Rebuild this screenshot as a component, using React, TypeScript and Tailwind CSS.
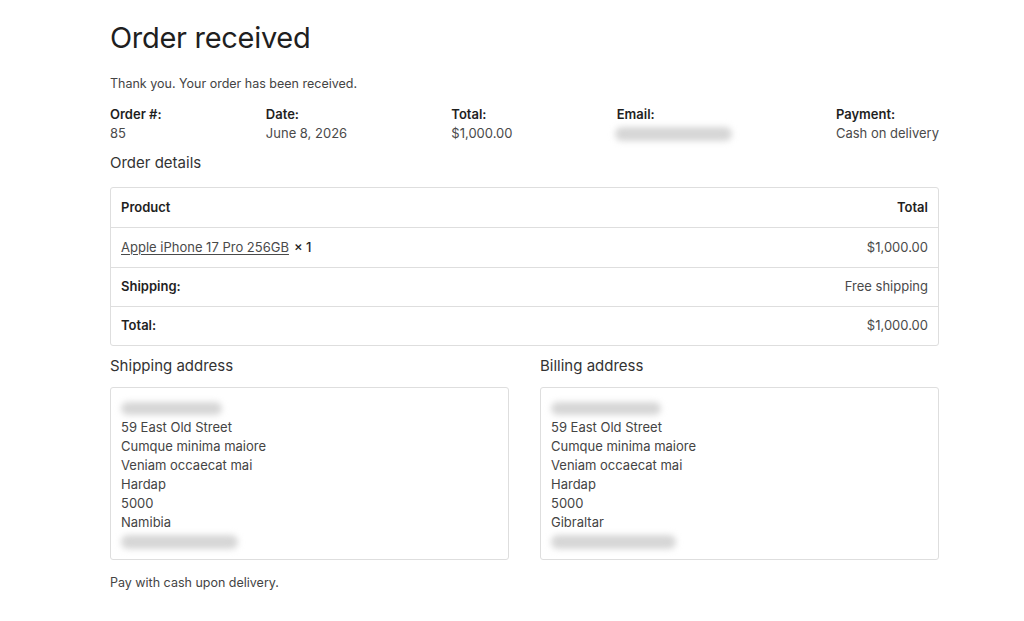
import React from "react";

const Blur = ({ w, h = 12, className = "" }: { w: number; h?: number; className?: string }) => (
  <div className={"rounded-full bg-[#d6d6d6] blur-[3px] " + className} style={{ width: w, height: h }} />
);

export default function App() {
  return (
    <div className="min-h-[621px] bg-white font-['Inter',sans-serif] text-[#4a4a4a]">
      <div className="ml-[110px] w-[829px] pt-[20px]">
        <h1 className="text-[29px] leading-[36px] font-normal tracking-[-0.3px] text-[#1f1f1f]">Order received</h1>
        <p className="mt-[19px] text-[12.5px] leading-[18px] text-[#444]">Thank you. Your order has been received.</p>
        <div className="mt-[12px] flex justify-between text-[13px] leading-[19px]">
          <div>
            <div className="font-semibold text-[#1f1f1f]">Order #:</div>
            <div>85</div>
          </div>
          <div>
            <div className="font-semibold text-[#1f1f1f]">Date:</div>
            <div>June 8, 2026</div>
          </div>
          <div>
            <div className="font-semibold text-[#1f1f1f]">Total:</div>
            <div>$1,000.00</div>
          </div>
          <div>
            <div className="font-semibold text-[#1f1f1f]">Email:</div>
            <div className="flex h-[19px] items-center">
              <Blur w={117} h={14} className="-ml-[2px]" />
            </div>
          </div>
          <div>
            <div className="font-semibold text-[#1f1f1f]">Payment:</div>
            <div>Cash on delivery</div>
          </div>
        </div>
        <h2 className="mt-[10px] text-[15px] leading-[20px] text-[#333]">Order details</h2>
        <div className="mt-[14px] overflow-hidden rounded-[3px] border border-[#dedede] text-[13px]">
          <div className="flex h-[39px] items-center justify-between px-[10px] font-semibold text-[#1f1f1f]">
            <span>Product</span>
            <span>Total</span>
          </div>
          <div className="flex h-[40px] items-center justify-between border-t border-[#dedede] px-[10px]">
            <span>
              <span className="underline underline-offset-2">Apple iPhone 17 Pro 256GB</span>
              <span className="ml-[5px] font-medium text-[#1f1f1f]">× 1</span>
            </span>
            <span>$1,000.00</span>
          </div>
          <div className="flex h-[39px] items-center justify-between border-t border-[#dedede] px-[10px]">
            <span className="font-semibold text-[#1f1f1f]">Shipping:</span>
            <span>Free shipping</span>
          </div>
          <div className="flex h-[39px] items-center justify-between border-t border-[#dedede] px-[10px]">
            <span className="font-semibold text-[#1f1f1f]">Total:</span>
            <span>$1,000.00</span>
          </div>
        </div>
        <div className="mt-[10px] grid grid-cols-2 gap-[31px]">
          {[
            { title: "Shipping address", country: "Namibia", w1: 101, w2: 117 },
            { title: "Billing address", country: "Gibraltar", w1: 110, w2: 125 },
          ].map((a) => (
            <div key={a.title}>
              <h3 className="text-[15px] leading-[20px] text-[#333]">{a.title}</h3>
              <div className="mt-[11px] rounded-[3px] border border-[#dedede] px-[10px] pt-[11px] pb-[8px] text-[13px] leading-[19px] text-[#444]">
                <div className="flex h-[19px] items-center">
                  <Blur w={a.w1} h={13} />
                </div>
                <div>59 East Old Street</div>
                <div>Cumque minima maiore</div>
                <div>Veniam occaecat mai</div>
                <div>Hardap</div>
                <div>5000</div>
                <div>{a.country}</div>
                <div className="flex h-[19px] items-center">
                  <Blur w={a.w2} h={14} />
                </div>
              </div>
            </div>
          ))}
        </div>
        <p className="mt-[14px] text-[12.5px] leading-[18px] text-[#444]">Pay with cash upon delivery.</p>
      </div>
    </div>
  );
}
